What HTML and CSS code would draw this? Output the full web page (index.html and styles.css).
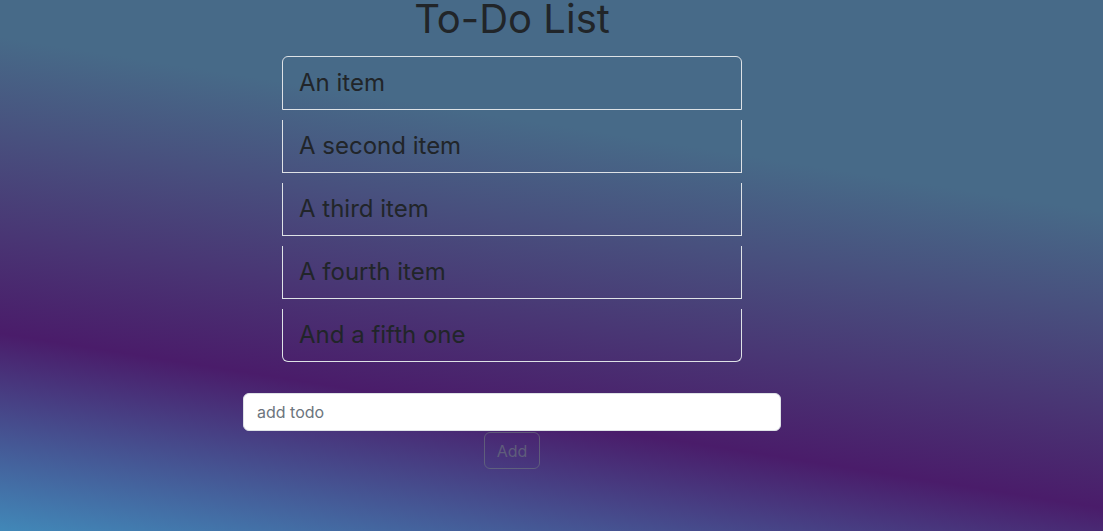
FILE: index.html
```html
<!DOCTYPE html>
<html lang="en">
<head>
<meta charset="utf-8">
<title>To-Do List</title>
<link rel="stylesheet" href="styles.css">
</head>
<body>
<main class="page">
  <h1 class="title">To-Do List</h1>
  <ul class="todo-list">
    <li class="todo-item">An item</li>
    <li class="todo-item">A second item</li>
    <li class="todo-item">A third item</li>
    <li class="todo-item">A fourth item</li>
    <li class="todo-item">And a fifth one</li>
  </ul>
  <form class="add-form">
    <input class="add-input" type="text" placeholder="add todo">
    <button class="add-btn" type="button" disabled>Add</button>
  </form>
</main>
</body>
</html>
```

FILE: styles.css
```css
html, body {
  margin: 0;
  padding: 0;
}
body {
  min-height: 100vh;
  font-family: "Inter", "Liberation Sans", sans-serif;
  color: #212529;
  background: linear-gradient(189deg, #476a88 0%, #476a88 30%, #4a1c6a 72%, #4188b8 100%);
}
.page {
  width: 1024px;
  display: flex;
  flex-direction: column;
  align-items: center;
}
.title {
  margin: 0 0 18px;
  font-size: 40px;
  font-weight: 400;
  line-height: 38px;
  color: #212529;
}
.todo-list {
  width: 460px;
  margin: 0;
  padding: 0;
  list-style: none;
  display: flex;
  flex-direction: column;
  gap: 10px;
}
.todo-item {
  border: 1px solid #dee2e6;
  border-top-width: 0;
  padding: 8px 16px;
  font-size: 24px;
  line-height: 36px;
  color: #212529;
}
.todo-item:first-child {
  border-top-width: 1px;
  border-top-left-radius: 6px;
  border-top-right-radius: 6px;
}
.todo-item:last-child {
  border-bottom-left-radius: 6px;
  border-bottom-right-radius: 6px;
}
.add-form {
  margin-top: 31px;
  width: 538px;
  display: flex;
  flex-direction: column;
  align-items: center;
}
.add-input {
  box-sizing: border-box;
  width: 100%;
  height: 38px;
  padding: 6px 13px;
  font-family: "Inter", "Liberation Sans", sans-serif;
  font-size: 16px;
  line-height: 24px;
  color: #212529;
  background: #fff;
  border: 1px solid #dee2e6;
  border-radius: 6px;
  outline: none;
}
.add-input::placeholder {
  color: #6c757d;
}
.add-btn {
  margin-top: 1px;
  box-sizing: border-box;
  height: 37px;
  padding: 6px 12px;
  font-family: "Inter", "Liberation Sans", sans-serif;
  font-size: 16px;
  line-height: 24px;
  color: #6c757d;
  background: transparent;
  border: 1px solid #6c757d;
  border-radius: 6px;
  opacity: 0.65;
}
```
